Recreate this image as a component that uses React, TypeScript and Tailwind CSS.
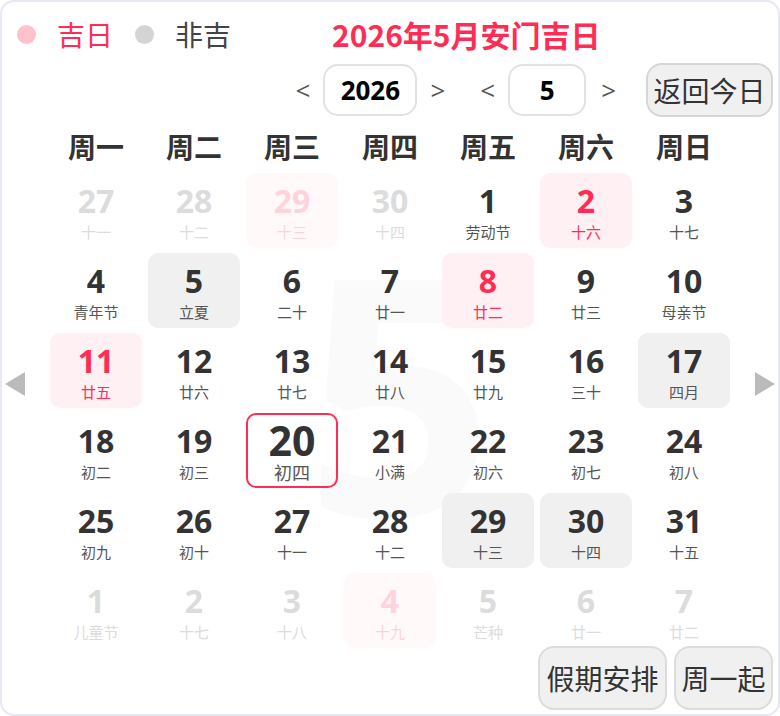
import React from 'react';

type Day = {
  n: number;
  l: string;
  kind?: 'faded' | 'fadedPink' | 'pink' | 'gray' | 'today';
};

const rows: Day[][] = [
  [
    { n: 27, l: '十一', kind: 'faded' },
    { n: 28, l: '十二', kind: 'faded' },
    { n: 29, l: '十三', kind: 'fadedPink' },
    { n: 30, l: '十四', kind: 'faded' },
    { n: 1, l: '劳动节' },
    { n: 2, l: '十六', kind: 'pink' },
    { n: 3, l: '十七' },
  ],
  [
    { n: 4, l: '青年节' },
    { n: 5, l: '立夏', kind: 'gray' },
    { n: 6, l: '二十' },
    { n: 7, l: '廿一' },
    { n: 8, l: '廿二', kind: 'pink' },
    { n: 9, l: '廿三' },
    { n: 10, l: '母亲节' },
  ],
  [
    { n: 11, l: '廿五', kind: 'pink' },
    { n: 12, l: '廿六' },
    { n: 13, l: '廿七' },
    { n: 14, l: '廿八' },
    { n: 15, l: '廿九' },
    { n: 16, l: '三十' },
    { n: 17, l: '四月', kind: 'gray' },
  ],
  [
    { n: 18, l: '初二' },
    { n: 19, l: '初三' },
    { n: 20, l: '初四', kind: 'today' },
    { n: 21, l: '小满' },
    { n: 22, l: '初六' },
    { n: 23, l: '初七' },
    { n: 24, l: '初八' },
  ],
  [
    { n: 25, l: '初九' },
    { n: 26, l: '初十' },
    { n: 27, l: '十一' },
    { n: 28, l: '十二' },
    { n: 29, l: '十三', kind: 'gray' },
    { n: 30, l: '十四', kind: 'gray' },
    { n: 31, l: '十五' },
  ],
  [
    { n: 1, l: '儿童节', kind: 'faded' },
    { n: 2, l: '十七', kind: 'faded' },
    { n: 3, l: '十八', kind: 'faded' },
    { n: 4, l: '十九', kind: 'fadedPink' },
    { n: 5, l: '芒种', kind: 'faded' },
    { n: 6, l: '廿一', kind: 'faded' },
    { n: 7, l: '廿二', kind: 'faded' },
  ],
];

const weekdays = ['周一', '周二', '周三', '周四', '周五', '周六', '周日'];

const cjk = "font-['Noto_Sans_CJK_SC',sans-serif]";
const num = "font-['Open_Sans','Noto_Sans_CJK_SC',sans-serif]";

function DayCell({ day }: { day: Day }) {
  const cellStyle = (() => {
    switch (day.kind) {
      case 'pink':
        return 'bg-[#fff0f3]';
      case 'gray':
        return 'bg-[#f0f0f0]';
      case 'fadedPink':
        return 'bg-[#fff9fa]';
      case 'today':
        return 'border-2 border-[#ff2d55]';
      default:
        return '';
    }
  })();

  const numColor =
    day.kind === 'pink'
      ? 'text-[#ff2d55]'
      : day.kind === 'faded'
      ? 'text-[#dcdcdc]'
      : day.kind === 'fadedPink'
      ? 'text-[#ffd3dc]'
      : 'text-[#333]';

  const lunarColor =
    day.kind === 'pink'
      ? 'text-[#ff2d55]'
      : day.kind === 'faded'
      ? 'text-[#dcdcdc]'
      : day.kind === 'fadedPink'
      ? 'text-[#ffd3dc]'
      : 'text-[#555]';

  if (day.kind === 'today') {
    return (
      <div className={`mx-[3px] h-[75px] rounded-[10px] flex flex-col items-center ${cellStyle}`}>
        <div className={`${num} mt-[5px] h-[40px] leading-[40px] text-[41px] font-bold ${numColor}`}>{day.n}</div>
        <div className={`${cjk} mt-[1px] leading-[22px] text-[18px] ${lunarColor}`}>{day.l}</div>
      </div>
    );
  }

  return (
    <div className={`mx-[3px] h-[75px] rounded-[10px] flex flex-col items-center ${cellStyle}`}>
      <div className={`${num} mt-[12px] h-[32px] leading-[32px] text-[32px] font-bold ${numColor}`}>{day.n}</div>
      <div className={`${cjk} mt-[5px] leading-[20px] text-[15px] ${lunarColor}`}>{day.l}</div>
    </div>
  );
}

export default function App() {
  return (
    <div className="w-[780px] h-[716px] bg-white">
      <div className={`relative w-[780px] h-[716px] border-2 border-[#e6e8f4] rounded-[14px] bg-white overflow-hidden ${cjk}`}>
        {/* legend + title */}
        <div className="flex items-center h-[42px] mt-[11px] pl-[15px]">
          <span className="w-[19px] h-[19px] rounded-full bg-[#ffc2cc]" />
          <span className="ml-[21px] text-[28px] leading-none text-[#ff2d55]">吉日</span>
          <span className="ml-[22px] w-[19px] h-[19px] rounded-full bg-[#d4d4d4]" />
          <span className="ml-[21px] text-[28px] leading-none text-[#444]">非吉</span>
          <span className="ml-[101px] text-[30px] leading-none font-bold text-[#ff2d55]">2026年5月安门吉日</span>
        </div>

        {/* year / month selectors */}
        <div className="flex items-center justify-end h-[54px] mt-[8px] pr-[5px]">
          <span className={`${num} text-[26px] text-[#555]`}>&lt;</span>
          <div className={`${num} ml-[13px] w-[94px] h-[52px] rounded-[15px] border-2 border-[#e2e2e2] flex items-center justify-center text-[26px] font-bold text-black`}>
            2026
          </div>
          <span className={`${num} ml-[13px] text-[26px] text-[#555]`}>&gt;</span>
          <span className={`${num} ml-[35px] text-[26px] text-[#555]`}>&lt;</span>
          <div className={`${num} ml-[13px] w-[78px] h-[52px] rounded-[15px] border-2 border-[#e2e2e2] flex items-center justify-center text-[26px] font-bold text-black`}>
            5
          </div>
          <span className={`${num} ml-[15px] text-[26px] text-[#555]`}>&gt;</span>
          <button className="ml-[30px] w-[127px] h-[54px] rounded-[16px] border-2 border-[#d6d6d6] bg-[#f0f0f0] text-[28px] text-[#333] leading-none">
            返回今日
          </button>
        </div>

        {/* weekday header */}
        <div className="grid grid-cols-7 w-[686px] ml-[45px] mt-[11px] h-[36px] items-center">
          {weekdays.map((w) => (
            <div key={w} className="text-center text-[28px] leading-none font-bold text-[#333]">
              {w}
            </div>
          ))}
        </div>

        {/* calendar body */}
        <div className="relative flex items-start mt-[9px]">
          <div className="w-[45px] flex justify-start pl-[3px] mt-[199px]">
            <svg width="20" height="24" viewBox="0 0 20 24">
              <polygon points="20,0 20,24 0,12" fill="#bbbbbb" />
            </svg>
          </div>
          <div className="relative w-[686px]">
            <div className={`${num} absolute left-[258px] top-[50px] text-[330px] leading-none font-bold text-[#fafafa] pointer-events-none select-none`}>
              5
            </div>
            <div className="relative grid grid-cols-7 gap-y-[5px]">
              {rows.flat().map((d, i) => (
                <DayCell key={i} day={d} />
              ))}
            </div>
          </div>
          <div className="flex-1 flex justify-end pr-[3px] mt-[199px]">
            <svg width="20" height="24" viewBox="0 0 20 24">
              <polygon points="0,0 0,24 20,12" fill="#bbbbbb" />
            </svg>
          </div>
        </div>

        {/* bottom buttons */}
        <div className="flex justify-end gap-[7px] pr-[5px] mt-[-2px]">
          <button className="w-[129px] h-[64px] rounded-[16px] border-2 border-[#dcdcdc] bg-[#f0f0f0] text-[28px] text-[#333] leading-none">
            假期安排
          </button>
          <button className="w-[99px] h-[64px] rounded-[16px] border-2 border-[#dcdcdc] bg-[#f0f0f0] text-[28px] text-[#333] leading-none">
            周一起
          </button>
        </div>
      </div>
    </div>
  );
}
